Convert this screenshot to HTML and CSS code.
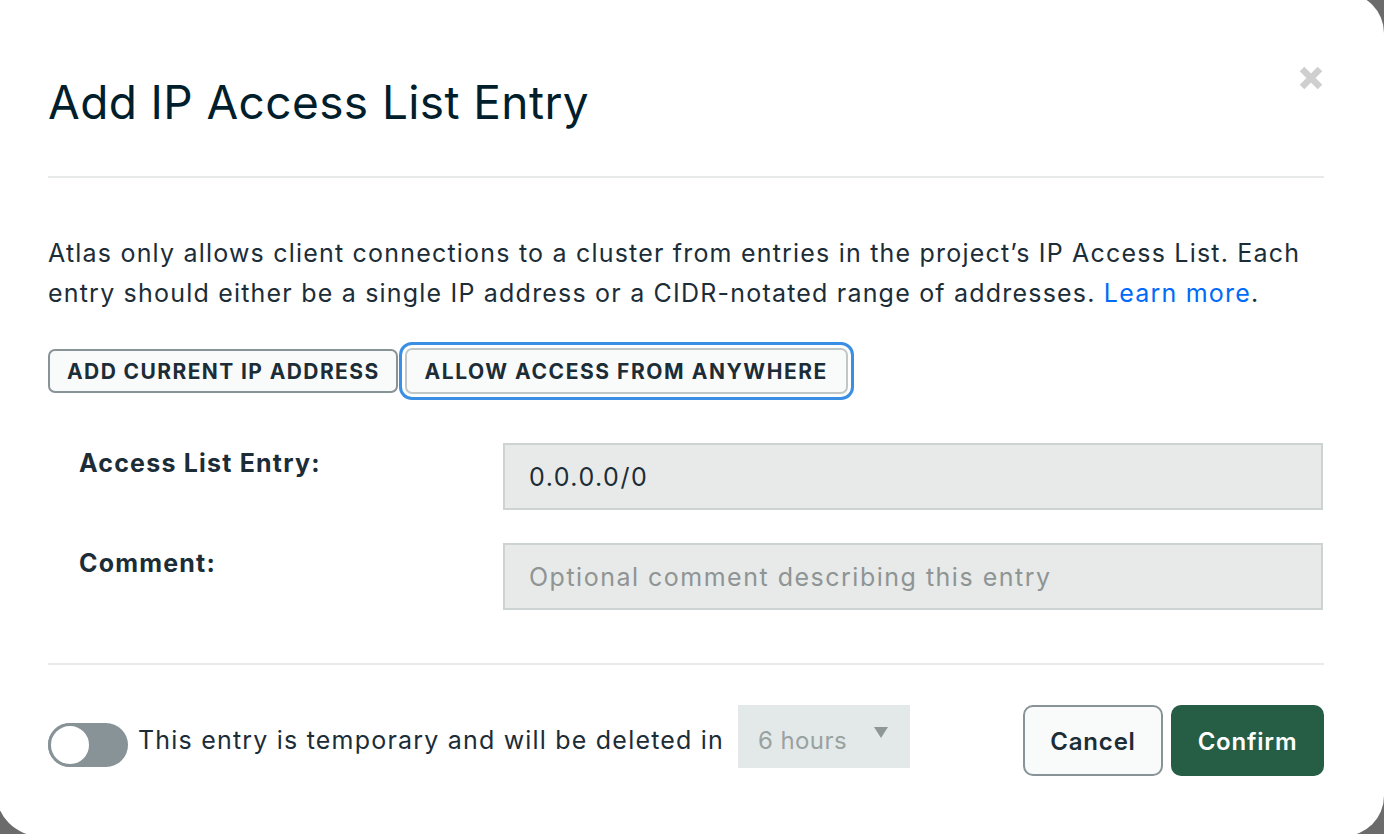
FILE: index.html
```html
<!DOCTYPE html>
<html lang="en">
<head>
<meta charset="utf-8">
<title>Add IP Access List Entry</title>
<link rel="stylesheet" href="styles.css">
</head>
<body>
<div class="modal">
  <header class="modal-header">
    <h1 class="modal-title">Add IP Access List Entry</h1>
    <button class="close-btn" aria-label="Close">
      <svg width="24" height="24" viewBox="0 0 24 24"><path d="M3 3 L21 21 M21 3 L3 21" stroke="#cfcfcf" stroke-width="6.5" stroke-linecap="butt"/></svg>
    </button>
  </header>
  <hr class="divider">
  <p class="intro">Atlas only allows client connections to a cluster from entries in the project’s IP Access List. Each<br>entry should either be a single IP address or a CIDR-notated range of addresses. <a href="#" class="link">Learn more</a>.</p>
  <div class="quick-actions">
    <button class="pill-btn">ADD CURRENT IP ADDRESS</button>
    <button class="pill-btn focused">ALLOW ACCESS FROM ANYWHERE</button>
  </div>
  <div class="form-grid">
    <label class="field-label">Access List Entry:</label>
    <div class="field-input value">0.0.0.0/0</div>
    <label class="field-label">Comment:</label>
    <div class="field-input placeholder">Optional comment describing this entry</div>
  </div>
  <hr class="divider lower">
  <footer class="modal-footer">
    <div class="temp-group">
      <span class="toggle"><span class="knob"></span></span>
      <span class="temp-text">This entry is temporary and will be deleted in</span>
      <span class="select"><span class="select-value">6 hours</span><span class="caret"></span></span>
    </div>
    <div class="actions">
      <button class="btn btn-cancel">Cancel</button>
      <button class="btn btn-confirm">Confirm</button>
    </div>
  </footer>
</div>
</body>
</html>
```
FILE: styles.css
```css
html, body {
  margin: 0;
  padding: 0;
  height: 100%;
  overflow: hidden;
}
body {
  background: #6b6b6b;
  font-family: "Inter", "Lato", sans-serif;
  color: #1c2d38;
}
.modal {
  box-sizing: border-box;
  width: 1388px;
  height: 843px;
  margin: -7px 0 0 -4px;
  background: #ffffff;
  border-radius: 10px 40px 40px 44px;
  padding: 79px 60px 0 52px;
}
.modal-header {
  display: flex;
  justify-content: space-between;
  align-items: flex-start;
  height: 60px;
}
.modal-title {
  margin: 0;
  font-size: 46px;
  font-weight: 400;
  line-height: 60px;
  color: #001e2b;
  letter-spacing: 0.4px;
}
.close-btn {
  margin: -6px 1px 0 0;
  padding: 0;
  border: 0;
  background: none;
  width: 24px;
  height: 24px;
  display: flex;
}
.divider {
  margin: 44px 0 0 0;
  border: 0;
  height: 2px;
  background: #e8eaea;
}
.intro {
  margin: 55px 0 0 0;
  font-size: 25px;
  line-height: 40px;
  letter-spacing: 1.2px;
  color: #1c2d38;
}
.link {
  color: #016bf8;
  text-decoration: none;
}
.quick-actions {
  display: flex;
  align-items: center;
  gap: 7px;
  margin-top: 35px;
  height: 46px;
}
.pill-btn {
  box-sizing: border-box;
  height: 44px;
  padding: 0 16px 0 17px;
  border: 2px solid #889397;
  border-radius: 7px;
  background: #f9fbfa;
  font-family: inherit;
  font-size: 21px;
  font-weight: 700;
  color: #1c2d38;
  letter-spacing: 1.4px;
}
.pill-btn.focused {
  height: 46px;
  padding: 0 18px 0 18px;
  letter-spacing: 1.55px;
  border-color: #c1c7c6;
  box-shadow: 0 0 0 3px #ffffff, 0 0 0 6px #3a8ee3;
}
.form-grid {
  display: grid;
  grid-template-columns: 455px 1fr;
  row-gap: 33px;
  margin-top: 49px;
}
.field-label {
  padding: 5px 0 0 31px;
  font-size: 25px;
  font-weight: 700;
  line-height: 30px;
  letter-spacing: 1.2px;
  color: #1c2d38;
}
.field-input {
  box-sizing: border-box;
  height: 67px;
  margin-right: 1px;
  border: 2px solid #cdd3d2;
  background: #e7eae9;
  padding: 0 24px;
  display: flex;
  align-items: center;
  font-size: 25px;
  letter-spacing: 1.5px;
}
.field-input.value {
  color: #1c2d38;
}
.field-input.placeholder {
  color: #8f9494;
}
.divider.lower {
  margin-top: 53px;
}
.modal-footer {
  display: flex;
  justify-content: space-between;
  align-items: flex-start;
  margin-top: 40px;
}
.temp-group {
  display: flex;
  align-items: center;
  height: 63px;
}
.toggle {
  position: relative;
  box-sizing: border-box;
  width: 80px;
  height: 44px;
  margin-top: 16px;
  border-radius: 22px;
  background: #889397;
  display: inline-block;
}
.knob {
  position: absolute;
  left: 0;
  top: 0;
  width: 38px;
  height: 38px;
  border-radius: 50%;
  background: #ffffff;
  border: 3px solid #889397;
}
.temp-text {
  margin-left: 10px;
  margin-top: 7px;
  font-size: 25px;
  letter-spacing: 1.2px;
  color: #1c2d38;
}
.select {
  box-sizing: border-box;
  width: 172px;
  height: 63px;
  margin-left: 14px;
  background: #e3e9e8;
  display: flex;
  align-items: center;
  justify-content: space-between;
  padding: 0 22px 0 20px;
}
.select-value {
  font-size: 24px;
  letter-spacing: 0.4px;
  color: #9aa1a1;
  margin-top: 7px;
}
.caret {
  width: 0;
  height: 0;
  border-left: 7px solid transparent;
  border-right: 7px solid transparent;
  border-top: 11px solid #8f9696;
  margin-top: -8px;
}
.actions {
  display: flex;
  gap: 8px;
}
.btn {
  box-sizing: border-box;
  height: 71px;
  padding-top: 3px;
  border-radius: 10px;
  font-family: inherit;
  font-size: 24px;
  font-weight: 600;
  letter-spacing: 0.8px;
}
.btn-cancel {
  width: 140px;
  border: 2px solid #889397;
  background: #f9fbfa;
  color: #1c2d38;
}
.btn-confirm {
  width: 153px;
  border: 0;
  background: #265e45;
  color: #ffffff;
}
```
